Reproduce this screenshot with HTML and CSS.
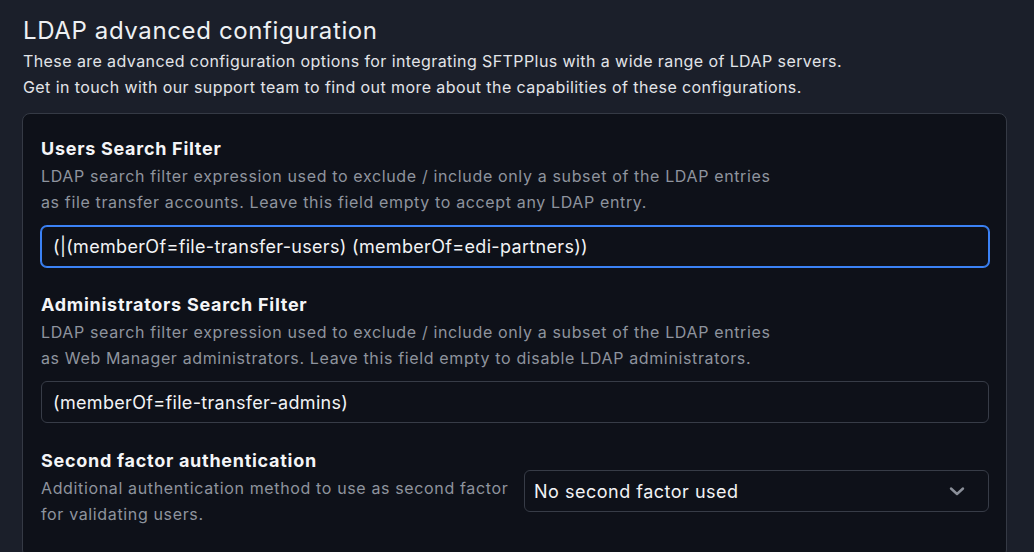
FILE: index.html
```html
<!DOCTYPE html>
<html lang="en">
<head>
<meta charset="utf-8">
<title>LDAP advanced configuration</title>
<link rel="stylesheet" href="styles.css">
</head>
<body>
<main class="page">
  <h1 class="title">LDAP advanced configuration</h1>
  <p class="intro">These are advanced configuration options for integrating SFTPPlus with a wide range of LDAP servers.<br>Get in touch with our support team to find out more about the capabilities of these configurations.</p>
  <section class="card">
    <div class="field">
      <h2 class="label">Users Search Filter</h2>
      <p class="help">LDAP search filter expression used to exclude / include only a subset of the LDAP entries<br>as file transfer accounts. Leave this field empty to accept any LDAP entry.</p>
      <div class="input focused">(|(memberOf=file-transfer-users) (memberOf=edi-partners))</div>
    </div>
    <div class="field">
      <h2 class="label">Administrators Search Filter</h2>
      <p class="help">LDAP search filter expression used to exclude / include only a subset of the LDAP entries<br>as Web Manager administrators. Leave this field empty to disable LDAP administrators.</p>
      <div class="input">(memberOf=file-transfer-admins)</div>
    </div>
    <div class="field split">
      <div class="split-text">
        <h2 class="label">Second factor authentication</h2>
        <p class="help">Additional authentication method to use as second factor<br>for validating users.</p>
      </div>
      <div class="input select">
        <span>No second factor used</span>
        <svg class="chevron" width="16" height="16" viewBox="0 0 16 16" fill="none"><path d="M2 5.5l6 5.5 6-5.5" stroke="#8a8f99" stroke-width="2.4" stroke-linecap="round" stroke-linejoin="round"/></svg>
      </div>
    </div>
  </section>
</main>
</body>
</html>
```

FILE: styles.css
```css
html, body {
  margin: 0;
  padding: 0;
  background: #1b1f2a;
  font-family: Inter, "Noto Sans", sans-serif;
  color: #e6e8ec;
  height: 100%;
  overflow: hidden;
}

.page {
  padding: 14px 27px 0 22px;
}

.title {
  margin: 0 0 0 1px;
  font-size: 24px;
  font-weight: 400;
  letter-spacing: 0.026em;
  line-height: 34px;
  color: #eef0f3;
}

.intro {
  margin: 0 0 13px 1px;
  font-size: 16px;
  letter-spacing: 0.026em;
  line-height: 26px;
  color: #e2e4e8;
}

.card {
  background: #0e1119;
  border: 1px solid #353a45;
  border-radius: 8px;
  padding: 21px 17px 30px 18px;
  display: flex;
  flex-direction: column;
  gap: 24px;
}

.field {
  display: flex;
  flex-direction: column;
}

.label {
  margin: 0;
  font-size: 18px;
  font-weight: 700;
  letter-spacing: 0.04em;
  line-height: 28px;
  color: #f4f5f7;
}

.help {
  margin: 0 0 10px;
  font-size: 16px;
  letter-spacing: 0.04em;
  line-height: 26px;
  color: #8e949e;
}

.input {
  box-sizing: border-box;
  height: 42px;
  border: 1px solid #373c47;
  border-radius: 6px;
  background: #0e1119;
  padding: 0 11px;
  display: flex;
  align-items: center;
  font-size: 18px;
  letter-spacing: 0.018em;
  color: #f2f3f5;
  white-space: nowrap;
}

.input.focused {
  border-color: #3b82f6;
  box-shadow: 0 0 0 1px #3b82f6;
  margin-top: 1px;
  height: 41px;
}

.split {
  flex-direction: row;
  align-items: flex-start;
  gap: 8px;
}

.split-text {
  flex: 1;
}

.split .help {
  margin-bottom: 0;
  white-space: nowrap;
}

.select {
  width: 465px;
  flex: none;
  margin-top: 23px;
  padding: 0 23px 0 9px;
  justify-content: space-between;
  letter-spacing: 0.028em;
}

.chevron {
  display: block;
}
```
